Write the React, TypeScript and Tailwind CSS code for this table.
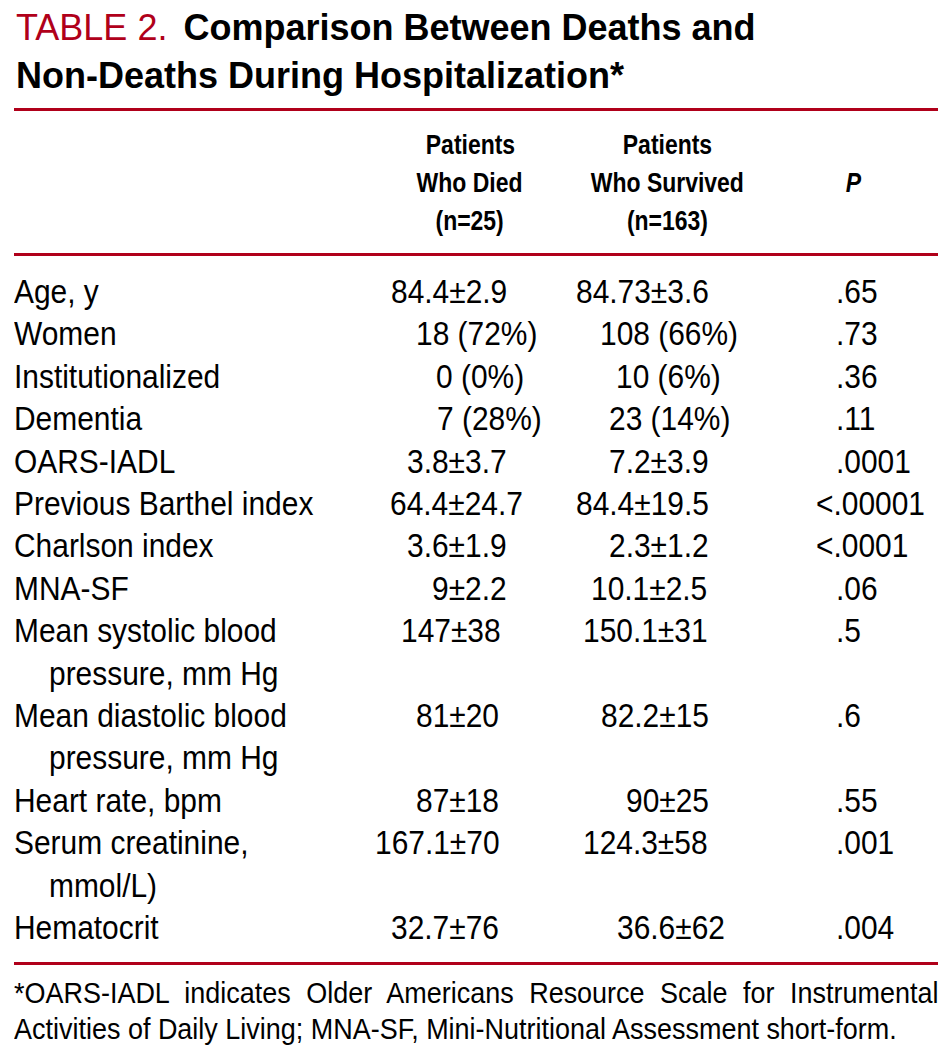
import React from "react";

type Row = {
  label: string[];
  died: string;
  diedPad: string;
  lived: string;
  livedPad: string;
  p: string;
  pPad: string;
};

const rows: Row[] = [
  { label: ["Age, y"], died: "84.4±2.9", diedPad: "pl-[16px]", lived: "84.73±3.6", livedPad: "pl-[16px]", p: ".65", pPad: "pl-[36px]" },
  { label: ["Women"], died: "18 (72%)", diedPad: "pl-[41px]", lived: "108 (66%)", livedPad: "pl-[40px]", p: ".73", pPad: "pl-[36px]" },
  { label: ["Institutionalized"], died: "0 (0%)", diedPad: "pl-[61px]", lived: "10 (6%)", livedPad: "pl-[56px]", p: ".36", pPad: "pl-[36px]" },
  { label: ["Dementia"], died: "7 (28%)", diedPad: "pl-[62px]", lived: "23 (14%)", livedPad: "pl-[49px]", p: ".11", pPad: "pl-[36px]" },
  { label: ["OARS-IADL"], died: "3.8±3.7", diedPad: "pl-[32px]", lived: "7.2±3.9", livedPad: "pl-[49px]", p: ".0001", pPad: "pl-[36px]" },
  { label: ["Previous Barthel index"], died: "64.4±24.7", diedPad: "pl-[15px]", lived: "84.4±19.5", livedPad: "pl-[16px]", p: "<.00001", pPad: "pl-[16px]" },
  { label: ["Charlson index"], died: "3.6±1.9", diedPad: "pl-[32px]", lived: "2.3±1.2", livedPad: "pl-[49px]", p: "<.0001", pPad: "pl-[16px]" },
  { label: ["MNA-SF"], died: "9±2.2", diedPad: "pl-[57px]", lived: "10.1±2.5", livedPad: "pl-[31px]", p: ".06", pPad: "pl-[36px]" },
  { label: ["Mean systolic blood", "pressure, mm Hg"], died: "147±38", diedPad: "pl-[26px]", lived: "150.1±31", livedPad: "pl-[23px]", p: ".5", pPad: "pl-[36px]" },
  { label: ["Mean diastolic blood", "pressure, mm Hg"], died: "81±20", diedPad: "pl-[41px]", lived: "82.2±15", livedPad: "pl-[41px]", p: ".6", pPad: "pl-[36px]" },
  { label: ["Heart rate, bpm"], died: "87±18", diedPad: "pl-[41px]", lived: "90±25", livedPad: "pl-[66px]", p: ".55", pPad: "pl-[36px]" },
  { label: ["Serum creatinine,", "mmol/L)"], died: "167.1±70", diedPad: "pl-[0px]", lived: "124.3±58", livedPad: "pl-[23px]", p: ".001", pPad: "pl-[36px]" },
  { label: ["Hematocrit"], died: "32.7±76", diedPad: "pl-[16px]", lived: "36.6±62", livedPad: "pl-[57px]", p: ".004", pPad: "pl-[36px]" },
];

const Rule = () => <div className="h-[3px] bg-[#b0001a]" />;

// condensed face: Arial metrics narrowed
const Narrow = ({ children }: { children: React.ReactNode }) => (
  <span className="inline-block origin-left scale-x-[0.88] whitespace-nowrap">{children}</span>
);

const HeadCell = ({ lines }: { lines: string[] }) => (
  <div className="text-center">
    {lines.map((l) => (
      <div key={l}>
        <span className="inline-block origin-center scale-x-[0.82] whitespace-nowrap">{l}</span>
      </div>
    ))}
  </div>
);

const App = () => {
  return (
    <div className="w-[950px] min-h-[1053px] overflow-hidden bg-white pl-[14px] pr-[12px] pt-[4px] text-black font-['Liberation_Sans',Arial,sans-serif]">
      <h1 className="text-[36px] leading-[48px] mb-[8px] pl-[2px]">
        <span className="text-[#b0001a]">TABLE 2.</span>
        <span className="ml-[6px] font-bold"> Comparison Between Deaths and</span>
        <br />
        <span className="font-bold">Non-Deaths During Hospitalization*</span>
      </h1>

      <Rule />

      <div className="grid grid-cols-[361px_190px_204px_1fr] pt-[15px] pb-[13px] text-[28px] leading-[38px] font-bold">
        <div />
        <HeadCell lines={["Patients", "Who Died", "(n=25)"]} />
        <HeadCell lines={["Patients", "Who Survived", "(n=163)"]} />
        <div className="flex items-center justify-center italic">
          <span className="inline-block origin-center scale-x-[0.82]">P</span>
        </div>
      </div>

      <Rule />

      <div className="grid grid-cols-[361px_185px_240px_1fr] pt-[14px] pb-[13px] text-[34px] leading-[42.4px]">
        {rows.map((r) => (
          <React.Fragment key={r.label[0]}>
            <div>
              {r.label.map((line, i) => (
                <div key={line} className={i > 0 ? "pl-[35px]" : ""}>
                  <Narrow>{line}</Narrow>
                </div>
              ))}
            </div>
            <div className={r.diedPad}>
              <Narrow>{r.died}</Narrow>
            </div>
            <div className={r.livedPad}>
              <Narrow>{r.lived}</Narrow>
            </div>
            <div className={r.pPad}>
              <Narrow>{r.p}</Narrow>
            </div>
          </React.Fragment>
        ))}
      </div>

      <Rule />

      <div className="pt-[10px] text-[29px] leading-[36px]">
        <div className="w-[994px] origin-left scale-x-[0.93] text-justify [text-align-last:justify]">
          *OARS-IADL indicates Older Americans Resource Scale for Instrumental
        </div>
        <div className="w-[994px] origin-left scale-x-[0.93] whitespace-nowrap">
          Activities of Daily Living; MNA-SF, Mini-Nutritional Assessment short-form.
        </div>
      </div>
    </div>
  );
};

export default App;
